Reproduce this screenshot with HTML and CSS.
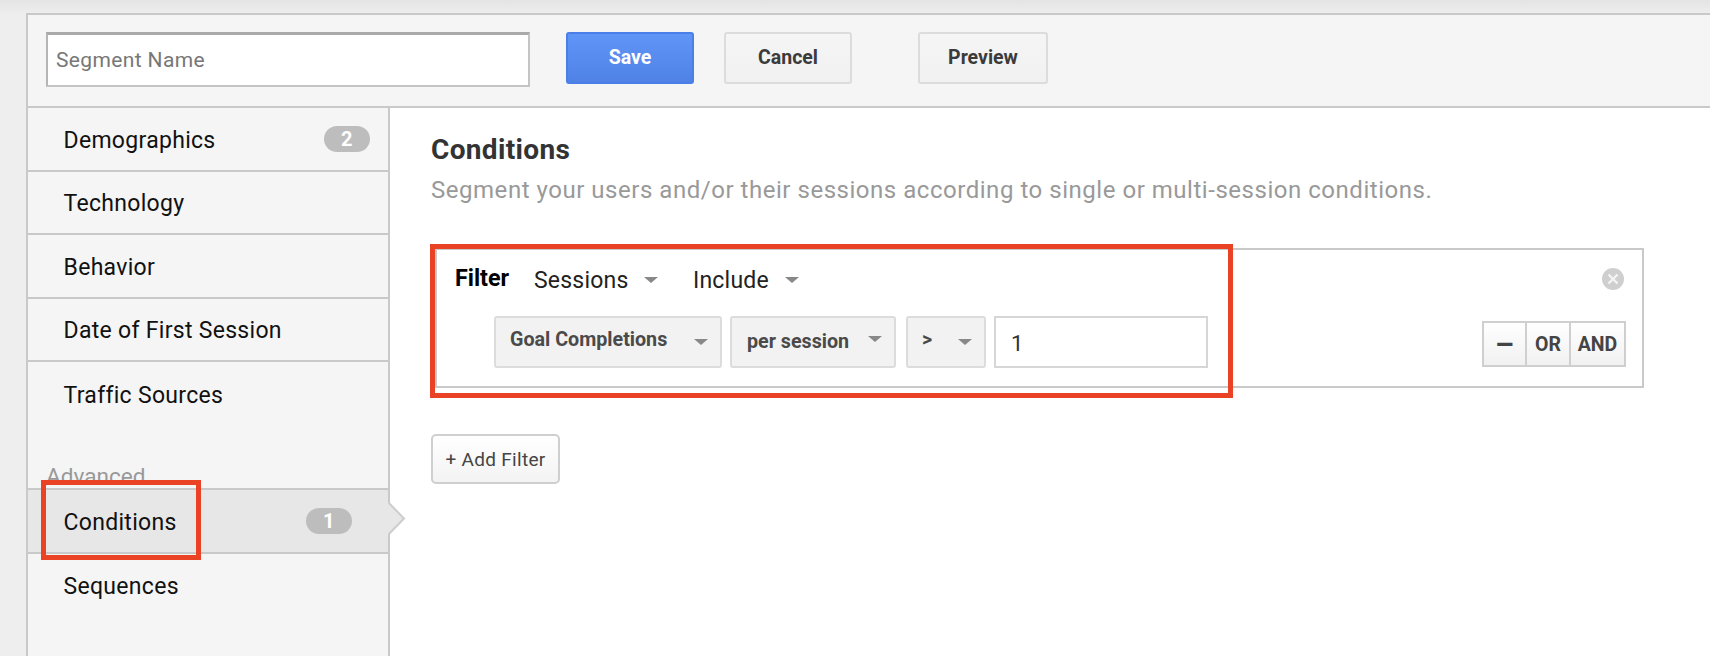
FILE: index.html
```html
<!DOCTYPE html>
<html lang="en">
<head>
  <meta charset="UTF-8" />
  <title>Segment Builder</title>
  <link rel="stylesheet" href="styles.css">
</head>
<body>
  <div class="panel">
    <div class="top-bar">
      <input class="name-input" type="text" placeholder="Segment Name">
      <button class="btn btn-save">Save</button>
      <button class="btn btn-cancel">Cancel</button>
      <button class="btn btn-preview">Preview</button>
    </div>
    <div class="main">
      <div class="sidebar">
        <div class="side-item">Demographics <span class="badge">2</span></div>
        <div class="side-item">Technology</div>
        <div class="side-item">Behavior</div>
        <div class="side-item">Date of First Session</div>
        <div class="side-item no-line">Traffic Sources</div>
        <div class="side-title">Advanced</div>
        <div class="side-item active">
          Conditions <span class="badge">1</span>
          <svg class="pointer" width="18" height="36" viewBox="0 0 18 36"><path d="M0 1 L16 17.5 L0 34" fill="#e7e7e7" stroke="#cdcdcd" stroke-width="2"/></svg>
          <div class="mark mark-side"></div>
        </div>
        <div class="side-item no-line">Sequences</div>
      </div>
      <div class="content">
        <h2>Conditions</h2>
        <p class="sub">Segment your users and/or their sessions according to single or multi-session conditions.</p>
        <div class="filter-card">
          <div class="mark mark-filter"></div>
          <div class="filter-top">
            <span class="filter-label">Filter</span>
            <span class="plain-select sessions">Sessions <i class="caret"></i></span>
            <span class="plain-select">Include <i class="caret"></i></span>
            <svg class="close-icon" width="22" height="22" viewBox="0 0 22 22"><circle cx="11" cy="11" r="11" fill="#cfcfcf"/><path d="M6.5 6.5 L15.5 15.5 M15.5 6.5 L6.5 15.5" stroke="#f4f4f4" stroke-width="2.4"/></svg>
          </div>
          <div class="filter-row">
            <div class="select sel-goal"><span class="raised">Goal Completions</span><i class="caret"></i></div>
            <div class="select sel-per"><span>per session</span><i class="caret raised"></i></div>
            <div class="select sel-op"><span class="raised">&gt;</span><i class="caret"></i></div>
            <input class="value-input" type="text" value="1">
            <div class="logic">
              <button class="logic-btn minus">&ndash;</button>
              <button class="logic-btn or">OR</button>
              <button class="logic-btn and">AND</button>
            </div>
          </div>
        </div>
        <button class="add-filter">+ Add Filter</button>
      </div>
    </div>
  </div>
</body>
</html>
```

FILE: styles.css
```css
* {
  box-sizing: border-box;
}
html, body {
  height: 100%;
}
body {
  margin: 0;
  padding: 13px 0 0 26px;
  overflow: hidden;
  font-family: Roboto, sans-serif;
  background: linear-gradient(#e4e4e4, #eeeeee 14px);
  color: #000;
}
button {
  font-family: Roboto, sans-serif;
  cursor: pointer;
}
.panel {
  height: 643px;
  overflow: hidden;
  border-top: 2px solid #c9c9c9;
  border-left: 2px solid #c9c9c9;
  background: #fff;
}
.top-bar {
  display: flex;
  align-items: flex-start;
  height: 93px;
  padding: 17px 0 0 18px;
  background: #f5f5f5;
  border-bottom: 2px solid #c9c9c9;
}
.name-input {
  width: 484px;
  height: 55px;
  padding: 0 8px;
  border: 2px solid #c4c4c4;
  border-top: 3px solid #a9a9a9;
  border-left-color: #b5b5b5;
  background: #fff;
  font: 21px Roboto, sans-serif;
  letter-spacing: 0.37px;
  outline: none;
}
.name-input::placeholder {
  color: #777;
  opacity: 1;
}
.btn {
  height: 52px;
  padding: 0 0 2px;
  border-radius: 3px;
  font-size: 19.5px;
  font-weight: 700;
  color: #3b3b3b;
  border: 2px solid #dcdcdc;
  background: linear-gradient(#f5f5f5, #f1f1f1);
}
.btn-save {
  width: 128px;
  margin-left: 36px;
  color: #fff;
  border-color: #4a7fe8;
  background: linear-gradient(#6095f8, #4f82e4);
}
.btn-cancel {
  width: 128px;
  margin-left: 30px;
}
.btn-preview {
  width: 130px;
  margin-left: 66px;
}
.main {
  display: flex;
  height: 548px;
}
.sidebar {
  width: 362px;
  flex-shrink: 0;
  background: #f5f5f5;
  border-right: 2px solid #c9c9c9;
}
.side-item {
  position: relative;
  display: flex;
  justify-content: space-between;
  align-items: center;
  height: 63.5px;
  padding: 3px 18px 0 35.5px;
  border-bottom: 2px solid #c9c9c9;
  font-size: 23px;
  letter-spacing: 0.3px;
  color: #111;
}
.side-item.no-line {
  border-bottom: none;
}
.side-title {
  height: 64px;
  padding: 39px 0 0 18px;
  border-bottom: 2px solid #c9c9c9;
  font-size: 22.6px;
  line-height: 24px;
  color: #999;
}
.side-item.active {
  height: 64px;
  padding-right: 36px;
  background: #e7e7e7;
}
.badge {
  width: 46px;
  height: 26px;
  margin-top: -3px;
  border-radius: 13px;
  background: #bdbdbd;
  color: #fff;
  font-size: 20px;
  font-weight: 700;
  line-height: 26px;
  text-align: center;
}
.pointer {
  position: absolute;
  right: -18px;
  top: 11px;
}
.mark {
  position: absolute;
  border: 5px solid #e94225;
  pointer-events: none;
}
.mark-side {
  left: 13px;
  top: -10px;
  width: 160px;
  height: 80px;
}
.content {
  flex: 1;
  padding: 0 66px 0 41px;
}
.content h2 {
  margin: 28px 0 0;
  font-size: 28px;
  line-height: 28px;
  font-weight: 700;
  letter-spacing: 0.35px;
  color: #333;
}
.sub {
  margin: 12px 0 0;
  font-size: 24px;
  line-height: 28px;
  color: #999;
  letter-spacing: 0.53px;
  white-space: nowrap;
}
.filter-card {
  position: relative;
  height: 140px;
  margin: 44px 0 0 4px;
  border: 2px solid #c9c9c9;
  padding: 0 16px 0 19px;
}
.mark-filter {
  left: -7px;
  top: -6px;
  width: 803px;
  height: 154px;
}
.filter-top {
  display: flex;
  align-items: center;
  height: 58px;
}
.filter-label {
  width: 79px;
  margin: -2px 0 0 -1px;
  font-size: 23.3px;
  font-weight: 700;
}
.plain-select {
  display: flex;
  align-items: center;
  margin-top: 2px;
  font-size: 23px;
  letter-spacing: 0.2px;
  color: #222;
}
.sessions {
  width: 159px;
}
.caret {
  display: inline-block;
  width: 0;
  height: 0;
  margin-left: 16px;
  border-left: 7px solid transparent;
  border-right: 7px solid transparent;
  border-top: 6px solid #888;
}
.close-icon {
  margin-left: auto;
  margin-right: 2px;
}
.filter-row {
  display: flex;
  align-items: flex-start;
  padding: 8px 0 0 38px;
}
.select {
  display: flex;
  align-items: center;
  justify-content: space-between;
  height: 52px;
  padding: 0 12px 0 14px;
  margin-right: 8px;
  border: 2px solid #dcdcdc;
  border-radius: 3px;
  background: #f2f2f2;
  font-size: 19.7px;
  font-weight: 700;
  color: #4a4a4a;
}
.select .caret {
  margin-left: 0;
}
.select .raised {
  position: relative;
  top: -3px;
}
.sel-goal {
  width: 228px;
}
.sel-per {
  width: 166px;
  margin-right: 10px;
}
.sel-per span {
  position: relative;
  top: -1px;
  left: 1px;
}
.sel-op {
  width: 80px;
  margin-right: 8px;
}
.value-input {
  width: 214px;
  height: 52px;
  padding: 2px 15px 0;
  border: 2px solid #d6d6d6;
  font: 22px Roboto, sans-serif;
  color: #333;
  outline: none;
}
.logic {
  display: flex;
  height: 46px;
  margin: 5px 0 0 auto;
  border: 2px solid #cfcfcf;
}
.logic-btn {
  height: 100%;
  padding: 0;
  border: none;
  border-left: 2px solid #cfcfcf;
  background: linear-gradient(#fff, #f1f1f1);
  font-size: 19.5px;
  font-weight: 700;
  color: #444;
}
.minus {
  width: 41px;
  border-left: none;
  font-size: 30px;
}
.or {
  width: 44px;
}
.and {
  width: 55px;
}
.add-filter {
  display: block;
  width: 129px;
  height: 50px;
  margin-top: 46px;
  border: 2px solid #cfcfcf;
  border-radius: 5px;
  background: linear-gradient(#fff, #f3f3f3);
  font-size: 19px;
  color: #444;
  letter-spacing: 0.3px;
}
```
